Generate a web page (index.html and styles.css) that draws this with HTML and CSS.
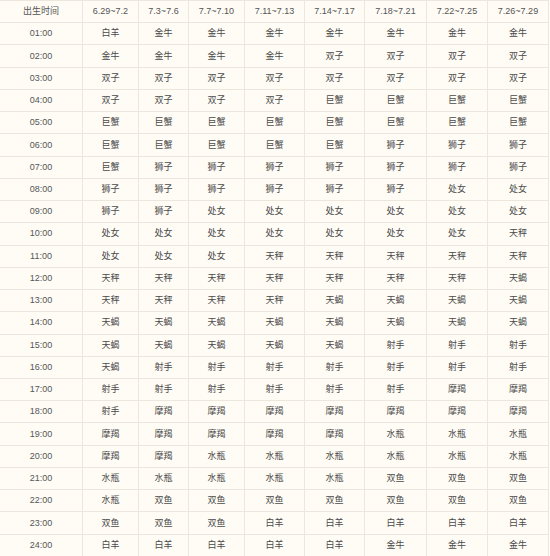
FILE: index.html
```html
<!DOCTYPE html>
<html lang="zh">
<head>
<meta charset="utf-8">
<link rel="stylesheet" href="styles.css">
</head>
<body>
<table class="zodiac">
<colgroup>
<col class="c1"><col class="c2"><col class="c3"><col class="c4"><col class="c5"><col class="c6"><col class="c7"><col class="c8"><col class="c9">
</colgroup>
<thead>
<tr><th>出生时间</th><th>6.29~7.2</th><th>7.3~7.6</th><th>7.7~7.10</th><th>7.11~7.13</th><th>7.14~7.17</th><th>7.18~7.21</th><th>7.22~7.25</th><th>7.26~7.29</th></tr>
</thead>
<tbody>
<tr><td>01:00</td><td>白羊</td><td>金牛</td><td>金牛</td><td>金牛</td><td>金牛</td><td>金牛</td><td>金牛</td><td>金牛</td></tr>
<tr><td>02:00</td><td>金牛</td><td>金牛</td><td>金牛</td><td>金牛</td><td>双子</td><td>双子</td><td>双子</td><td>双子</td></tr>
<tr><td>03:00</td><td>双子</td><td>双子</td><td>双子</td><td>双子</td><td>双子</td><td>双子</td><td>双子</td><td>双子</td></tr>
<tr><td>04:00</td><td>双子</td><td>双子</td><td>双子</td><td>双子</td><td>巨蟹</td><td>巨蟹</td><td>巨蟹</td><td>巨蟹</td></tr>
<tr><td>05:00</td><td>巨蟹</td><td>巨蟹</td><td>巨蟹</td><td>巨蟹</td><td>巨蟹</td><td>巨蟹</td><td>巨蟹</td><td>巨蟹</td></tr>
<tr><td>06:00</td><td>巨蟹</td><td>巨蟹</td><td>巨蟹</td><td>巨蟹</td><td>巨蟹</td><td>狮子</td><td>狮子</td><td>狮子</td></tr>
<tr><td>07:00</td><td>巨蟹</td><td>狮子</td><td>狮子</td><td>狮子</td><td>狮子</td><td>狮子</td><td>狮子</td><td>狮子</td></tr>
<tr><td>08:00</td><td>狮子</td><td>狮子</td><td>狮子</td><td>狮子</td><td>狮子</td><td>狮子</td><td>处女</td><td>处女</td></tr>
<tr><td>09:00</td><td>狮子</td><td>狮子</td><td>处女</td><td>处女</td><td>处女</td><td>处女</td><td>处女</td><td>处女</td></tr>
<tr><td>10:00</td><td>处女</td><td>处女</td><td>处女</td><td>处女</td><td>处女</td><td>处女</td><td>处女</td><td>天秤</td></tr>
<tr><td>11:00</td><td>处女</td><td>处女</td><td>处女</td><td>天秤</td><td>天秤</td><td>天秤</td><td>天秤</td><td>天秤</td></tr>
<tr><td>12:00</td><td>天秤</td><td>天秤</td><td>天秤</td><td>天秤</td><td>天秤</td><td>天秤</td><td>天秤</td><td>天蝎</td></tr>
<tr><td>13:00</td><td>天秤</td><td>天秤</td><td>天秤</td><td>天秤</td><td>天蝎</td><td>天蝎</td><td>天蝎</td><td>天蝎</td></tr>
<tr><td>14:00</td><td>天蝎</td><td>天蝎</td><td>天蝎</td><td>天蝎</td><td>天蝎</td><td>天蝎</td><td>天蝎</td><td>天蝎</td></tr>
<tr><td>15:00</td><td>天蝎</td><td>天蝎</td><td>天蝎</td><td>天蝎</td><td>天蝎</td><td>射手</td><td>射手</td><td>射手</td></tr>
<tr><td>16:00</td><td>天蝎</td><td>射手</td><td>射手</td><td>射手</td><td>射手</td><td>射手</td><td>射手</td><td>射手</td></tr>
<tr><td>17:00</td><td>射手</td><td>射手</td><td>射手</td><td>射手</td><td>射手</td><td>射手</td><td>摩羯</td><td>摩羯</td></tr>
<tr><td>18:00</td><td>射手</td><td>摩羯</td><td>摩羯</td><td>摩羯</td><td>摩羯</td><td>摩羯</td><td>摩羯</td><td>摩羯</td></tr>
<tr><td>19:00</td><td>摩羯</td><td>摩羯</td><td>摩羯</td><td>摩羯</td><td>摩羯</td><td>水瓶</td><td>水瓶</td><td>水瓶</td></tr>
<tr><td>20:00</td><td>摩羯</td><td>摩羯</td><td>水瓶</td><td>水瓶</td><td>水瓶</td><td>水瓶</td><td>水瓶</td><td>水瓶</td></tr>
<tr><td>21:00</td><td>水瓶</td><td>水瓶</td><td>水瓶</td><td>水瓶</td><td>水瓶</td><td>双鱼</td><td>双鱼</td><td>双鱼</td></tr>
<tr><td>22:00</td><td>水瓶</td><td>双鱼</td><td>双鱼</td><td>双鱼</td><td>双鱼</td><td>双鱼</td><td>双鱼</td><td>双鱼</td></tr>
<tr><td>23:00</td><td>双鱼</td><td>双鱼</td><td>双鱼</td><td>白羊</td><td>白羊</td><td>白羊</td><td>白羊</td><td>白羊</td></tr>
<tr><td>24:00</td><td>白羊</td><td>白羊</td><td>白羊</td><td>白羊</td><td>白羊</td><td>金牛</td><td>金牛</td><td>金牛</td></tr>
</tbody>
</table>
</body>
</html>
```

FILE: styles.css
```css
html, body {
  margin: 0;
  padding: 0;
  background: #fffdf9;
}
.zodiac {
  border-collapse: collapse;
  table-layout: fixed;
  width: 549px;
  margin-left: -1px;
  background: #fffcf6;
  font-family: "Liberation Sans", "Noto Sans CJK SC", sans-serif;
  font-size: 9px;
  color: #4a4a4a;
}
.c1 { width: 83px; }
.c2 { width: 56px; }
.c3 { width: 50px; }
.c4 { width: 56px; }
.c5 { width: 60px; }
.c6 { width: 60px; }
.c7 { width: 62px; }
.c8 { width: 61px; }
.c9 { width: 61px; }
.zodiac th, .zodiac td {
  height: 21.24px;
  padding: 0;
  text-align: center;
  vertical-align: middle;
  border: 1px solid #ece6dc;
  font-weight: normal;
  line-height: 1;
  white-space: nowrap;
}
.zodiac th { color: #555; }
.zodiac td:first-child { color: #555; }
```
